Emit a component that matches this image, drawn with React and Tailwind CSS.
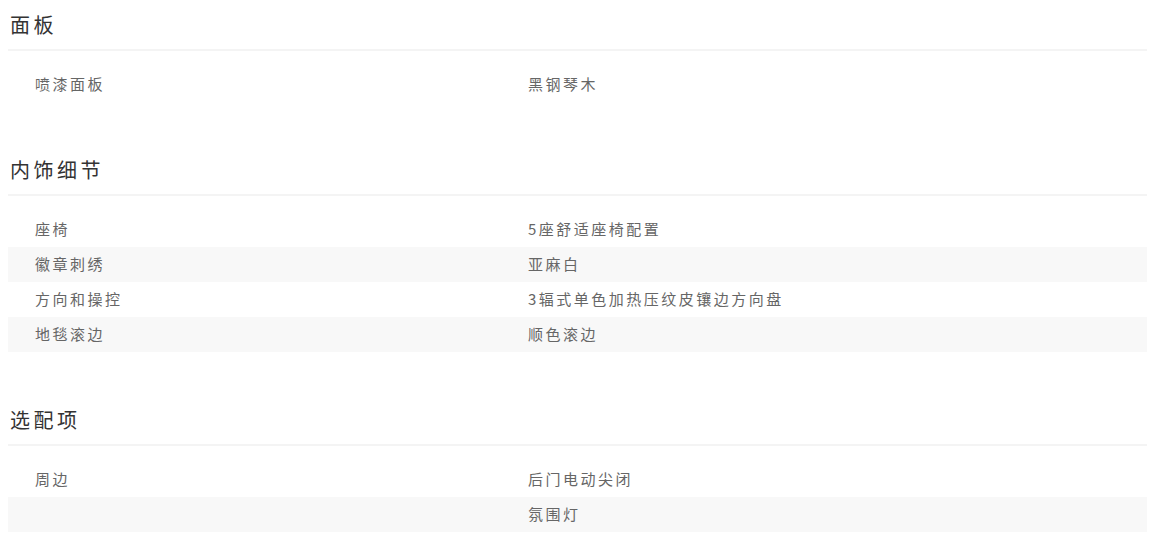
const sections = [
  {
    title: "面板",
    rows: [["喷漆面板", "黑钢琴木"]],
  },
  {
    title: "内饰细节",
    rows: [
      ["座椅", "5座舒适座椅配置"],
      ["徽章刺绣", "亚麻白"],
      ["方向和操控", "3辐式单色加热压纹皮镶边方向盘"],
      ["地毯滚边", "顺色滚边"],
    ],
  },
  {
    title: "选配项",
    rows: [
      ["周边", "后门电动尖闭"],
      ["", "氛围灯"],
    ],
  },
];

export default function App() {
  return (
    <div
      className="w-[1150px] h-[535px] overflow-hidden bg-white pl-2 pr-[3px]"
      style={{ fontFamily: '"Noto Sans CJK SC", "Noto Sans", sans-serif' }}
    >
      {sections.map((s, i) => (
        <section key={s.title} className={i > 0 ? "mt-[43px]" : ""}>
          <h2 className="h-[49px] flex items-center pl-[2px] text-[20px] tracking-[3.5px] text-[#333] font-normal border-b-2 border-[#f4f4f4] box-content">
            {s.title}
          </h2>
          <div className="mt-4">
            {s.rows.map(([label, value], j) => (
              <div
                key={j}
                className={
                  "flex items-center h-[35px] text-[15px] tracking-[2.5px] text-[#666] " +
                  (j % 2 === 1 ? "bg-[#f8f8f8]" : "")
                }
              >
                <div className="w-[520px] pl-[27px]">{label}</div>
                <div>{value}</div>
              </div>
            ))}
          </div>
        </section>
      ))}
    </div>
  );
}
